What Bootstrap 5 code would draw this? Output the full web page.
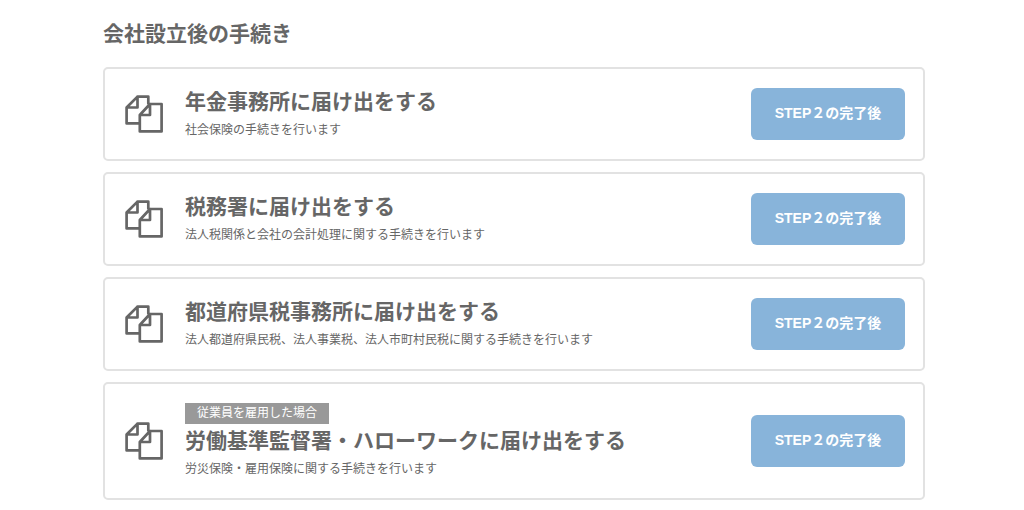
<!DOCTYPE html>
<html lang="ja">
<head>
<meta charset="utf-8">
<meta name="viewport" content="width=device-width, initial-scale=1">
<title>会社設立後の手続き</title>
<link href="https://cdn.jsdelivr.net/npm/bootstrap@5.3.0/dist/css/bootstrap.min.css" rel="stylesheet">
<style>
body { font-family: "Liberation Sans", "Noto Sans CJK JP", sans-serif; color: #666; background: #fff; }
.page { max-width: 822px; }
.heading { font-size: 21px; line-height: 28px; font-weight: 700; }
.steps { gap: 11px; margin-top: 19px; }
.step { border: 2px solid #e2e2e2; border-radius: 5px; padding: 19px 18px 19px 19px; }
.docs { width: 38px; height: 38px; margin-left: 1px; margin-right: 22px; }
.desc { font-size: 12px; line-height: 20px; margin-top: 4px; }
.tag { font-size: 12px; line-height: 21px; background: #999; color: #fff; padding: 0 12px; margin-bottom: 3px; }
.btn-step { --bs-btn-bg: #88b4da; --bs-btn-color: #fff; --bs-btn-hover-bg: #74a5cf; --bs-btn-hover-color: #fff; --bs-btn-border-radius: 6px; --bs-btn-font-size: 14px; --bs-btn-font-weight: 700; --bs-btn-line-height: 20px; width: 154px; height: 52px; padding: 0 0 2px; border: 0; }
</style>
</head>
<body class="ps-1">
<svg class="d-none" aria-hidden="true">
  <symbol id="docs" viewBox="0 0 38 38">
    <g fill="none" stroke="#666" stroke-width="2.7" stroke-linejoin="round" stroke-linecap="round">
      <path d="M14 28.4H1.6V12.5L12.5 1.6h10.8V8.5M12.5 1.6v10.9H1.6"/>
      <path d="M25 9h11.6v27.4H14.8V20L25 9v11H14.8"/>
    </g>
  </symbol>
</svg>
<main class="page container-fluid px-0 pb-2 pt-3">
  <h1 class="heading mt-1 mb-0">会社設立後の手続き</h1>
  <div class="steps d-flex flex-column">
    <section class="step d-flex align-items-center">
      <svg class="docs flex-shrink-0" aria-hidden="true"><use href="#docs"/></svg>
      <div class="flex-grow-1">
        <h2 class="heading mb-0">年金事務所に届け出をする</h2>
        <p class="desc mb-0">社会保険の手続きを行います</p>
      </div>
      <button type="button" class="btn btn-step flex-shrink-0">STEP２の完了後</button>
    </section>
    <section class="step d-flex align-items-center">
      <svg class="docs flex-shrink-0" aria-hidden="true"><use href="#docs"/></svg>
      <div class="flex-grow-1">
        <h2 class="heading mb-0">税務署に届け出をする</h2>
        <p class="desc mb-0">法人税関係と会社の会計処理に関する手続きを行います</p>
      </div>
      <button type="button" class="btn btn-step flex-shrink-0">STEP２の完了後</button>
    </section>
    <section class="step d-flex align-items-center">
      <svg class="docs flex-shrink-0" aria-hidden="true"><use href="#docs"/></svg>
      <div class="flex-grow-1">
        <h2 class="heading mb-0">都道府県税事務所に届け出をする</h2>
        <p class="desc mb-0">法人都道府県民税、法人事業税、法人市町村民税に関する手続きを行います</p>
      </div>
      <button type="button" class="btn btn-step flex-shrink-0">STEP２の完了後</button>
    </section>
    <section class="step d-flex align-items-center">
      <svg class="docs flex-shrink-0" aria-hidden="true"><use href="#docs"/></svg>
      <div class="flex-grow-1">
        <div class="d-flex"><span class="tag">従業員を雇用した場合</span></div>
        <h2 class="heading mb-0">労働基準監督署・ハローワークに届け出をする</h2>
        <p class="desc mb-0">労災保険・雇用保険に関する手続きを行います</p>
      </div>
      <button type="button" class="btn btn-step flex-shrink-0">STEP２の完了後</button>
    </section>
  </div>
</main>
</body>
</html>
